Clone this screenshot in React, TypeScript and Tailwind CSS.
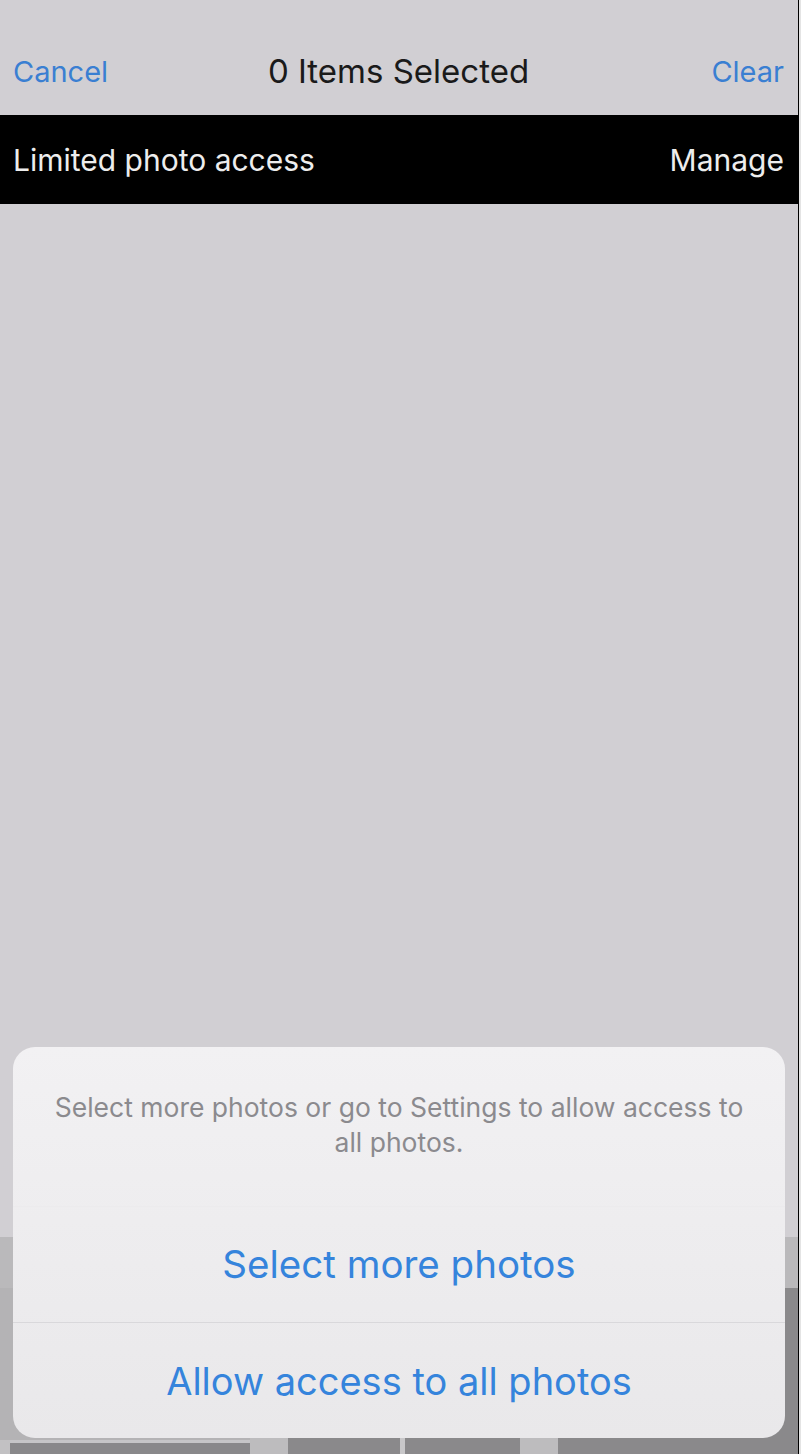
import React from "react";

export default function App() {
  return (
    <div className="w-[801px] h-[1454px] flex flex-row overflow-hidden font-['Inter',sans-serif]">
      <div className="relative w-[798px] h-full flex flex-col bg-[#d1cfd3]">
        {/* nav bar */}
        <header className="h-[115px] shrink-0 grid grid-cols-3 items-center pt-[27px] pl-[13px] pr-[14px]">
          <span className="justify-self-start text-[29px] text-[#3a7fd2] leading-none">Cancel</span>
          <span className="justify-self-center whitespace-nowrap text-[33px] text-[#1a1a1a] leading-none">0 Items Selected</span>
          <span className="justify-self-end text-[29px] text-[#3a7fd2] leading-none">Clear</span>
        </header>

        {/* limited access banner */}
        <div className="h-[89px] shrink-0 bg-black flex items-center justify-between pl-[13px] pr-[14px]">
          <span className="text-[30px] text-[#ededed] leading-none">Limited photo access</span>
          <span className="text-[30px] text-[#ededed] leading-none">Manage</span>
        </div>

        {/* empty area */}
        <div className="flex-1" />

        {/* photo grid peeking behind the sheet */}
        <div className="h-[217px] shrink-0 flex flex-col">
          <div className="h-[51px] bg-[#bab9bb]" />
          <div className="flex-1 flex flex-row">
            <div className="w-[250px] flex flex-col bg-[#b4b3b5]">
              <div className="flex-1" />
              <div className="h-[14px] flex flex-row">
                <div className="w-[10px] bg-[#c2c1c3]" />
                <div className="flex-1 flex flex-col">
                  <div className="h-[3px] bg-[#c6c5c7]" />
                  <div className="flex-1 bg-[#89888a]" />
                </div>
              </div>
            </div>
            <div className="w-[38px] bg-[#bdbcbe]" />
            <div className="w-[112px] bg-[#8a898b]" />
            <div className="w-[5px] bg-[#c8c7c9]" />
            <div className="w-[115px] bg-[#8a898b]" />
            <div className="w-[38px] bg-[#bdbcbe]" />
            <div className="flex-1 bg-[#8a898b]" />
          </div>
        </div>

        {/* action sheet */}
        <div className="absolute left-[13px] top-[1047px] w-[772px] h-[391px] rounded-[22px] overflow-hidden flex flex-col bg-gradient-to-b from-[#f2f1f3] to-[#e9e8ea]">
          <div className="h-[160px] shrink-0 flex items-center justify-center border-b border-[#ecebed]">
            <p className="text-center whitespace-nowrap text-[26.5px] leading-[35px] text-[#8b8a8e] -mt-[4px]">
              Select more photos or go to Settings to allow access to
              <br />
              all photos.
            </p>
          </div>
          <div className="h-[116px] shrink-0 flex items-center justify-center border-b border-[#d9d8db]">
            <span className="text-[38.5px] text-[#3584dc] leading-none">Select more photos</span>
          </div>
          <div className="flex-1 flex items-center justify-center">
            <span className="text-[38px] text-[#3584dc] leading-none">Allow access to all photos</span>
          </div>
        </div>
      </div>
      <div className="w-[1px] h-full bg-black" />
      <div className="flex-1 h-full bg-[#e4e4e4]" />
    </div>
  );
}
